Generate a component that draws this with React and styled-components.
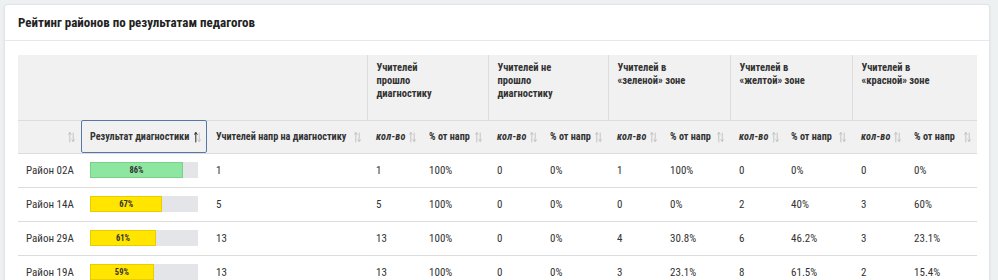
import React from 'react';
import styled, { createGlobalStyle } from 'styled-components';

const FONT = `"Liberation Sans Narrow", "Roboto Condensed", "DejaVu Sans Condensed", Roboto, sans-serif`;

const Global = createGlobalStyle`
  html, body { margin: 0; padding: 0; background: #edf1f2; }
  body { font-family: ${FONT}; color: #333; }
`;

const Page = styled.div`
  box-sizing: border-box;
  height: 280px;
  overflow: hidden;
  padding: 4px 0 0 4px;
`;

const Card = styled.section`
  box-sizing: border-box;
  width: 986px;
  min-height: 300px;
  background: #fff;
  border: 1px solid #e1e5e7;
  border-radius: 3px;
  box-shadow: 0 1px 3px rgba(0, 0, 0, 0.06);
`;

const CardHeader = styled.header`
  height: 35px;
  display: flex;
  align-items: center;
  padding: 0 13px;
  border-bottom: 1px solid #e6e9eb;
`;

const Title = styled.h3`
  margin: 0;
  font-size: 13px;
  font-weight: 700;
  color: #222;
`;

const CardBody = styled.div`
  padding: 14px 13px 0 13px;
`;

const Table = styled.table`
  width: 959px;
  table-layout: fixed;
  border-collapse: collapse;
  font-family: ${FONT};
`;

const GroupTh = styled.th`
  height: 65px;
  box-sizing: border-box;
  background: #f1f1f1;
  vertical-align: top;
  text-align: left;
  padding: 6px 9px 0 9px;
  border-bottom: 1px solid #dcdcdc;
  border-left: ${(p) => (p.$sep ? '1px solid #dcdcdc' : 'none')};
`;

const GroupLabel = styled.div`
  max-width: 74px;
  font-size: 10.5px;
  font-weight: 700;
  line-height: 13px;
  color: #333;
`;

const SubTh = styled.th`
  height: 33px;
  box-sizing: border-box;
  background: #f1f1f1;
  padding: 0 6px 0 9px;
  border-bottom: 1px solid #dcdcdc;
  text-align: left;
  font-size: 10.2px;
  font-weight: 700;
  color: #333;
  white-space: nowrap;
  outline: ${(p) => (p.$active ? '1px solid #5877a8' : 'none')};
  outline-offset: -1px;
  border-radius: ${(p) => (p.$active ? '2px' : '0')};
`;

const SubInner = styled.div`
  display: flex;
  align-items: center;
  justify-content: ${(p) => (p.$empty ? 'flex-end' : 'space-between')};
  gap: 3px;
`;

const SubLabel = styled.span`
  font-style: ${(p) => (p.$italic ? 'italic' : 'normal')};
  letter-spacing: ${(p) => (p.$italic ? '0.3px' : '0')};
`;

const Td = styled.td`
  height: 34px;
  box-sizing: border-box;
  padding: 0 9px;
  border-bottom: 1px solid #dcdcdc;
  font-size: 11px;
  color: #333;
  white-space: nowrap;
`;

const NameTd = styled(Td)`
  padding-left: 8px;
`;

const Bar = styled.div`
  width: 108px;
  height: 16px;
  background: #e3e5e8;
  display: flex;
`;

const Fill = styled.div`
  box-sizing: border-box;
  height: 100%;
  background: ${(p) => (p.$tone === 'green' ? '#8fe6a1' : '#ffe500')};
  border: 1px solid ${(p) => (p.$tone === 'green' ? '#74d48a' : '#e8cd00')};
  display: flex;
  align-items: center;
  justify-content: center;
  font-size: 8.5px;
  font-weight: 700;
  color: #333;
`;

const SortIcon = ({ active }) => (
  <svg width="7" height="12" viewBox="0 0 7 12" style={{ flex: 'none' }}>
    <g fill="none" strokeWidth="1" strokeLinecap="round" strokeLinejoin="round">
      <g stroke={active ? '#2b2b2b' : '#c4c4c4'}>
        <line x1="1.8" y1="1.5" x2="1.8" y2="11" />
        <polyline points="0.4,3.4 1.8,1.5 3.2,3.4" />
      </g>
      <g stroke="#c4c4c4">
        <line x1="5.2" y1="2" x2="5.2" y2="10.5" />
        <polyline points="3.8,8.6 5.2,10.5 6.6,8.6" />
      </g>
    </g>
  </svg>
);

const widths = [63, 126, 160, 53, 68, 53, 67, 53, 69, 52, 70, 53, 72];

const groups = [
  'Учителей прошло диагностику',
  'Учителей не прошло диагностику',
  'Учителей в «зеленой» зоне',
  'Учителей в «желтой» зоне',
  'Учителей в «красной» зоне',
];

const rows = [
  { name: 'Район 02А', pct: 86, tone: 'green', sent: 1, v: [['1', '100%'], ['0', '0%'], ['1', '100%'], ['0', '0%'], ['0', '0%']] },
  { name: 'Район 14А', pct: 67, tone: 'yellow', sent: 5, v: [['5', '100%'], ['0', '0%'], ['0', '0%'], ['2', '40%'], ['3', '60%']] },
  { name: 'Район 29А', pct: 61, tone: 'yellow', sent: 13, v: [['13', '100%'], ['0', '0%'], ['4', '30.8%'], ['6', '46.2%'], ['3', '23.1%']] },
  { name: 'Район 19А', pct: 59, tone: 'yellow', sent: 13, v: [['13', '100%'], ['0', '0%'], ['3', '23.1%'], ['8', '61.5%'], ['2', '15.4%']] },
];

export default function App() {
  return (
    <>
      <Global />
      <Page>
        <Card>
          <CardHeader>
            <Title>Рейтинг районов по результатам педагогов</Title>
          </CardHeader>
          <CardBody>
            <Table>
              <colgroup>
                {widths.map((w, i) => (
                  <col key={i} style={{ width: w }} />
                ))}
              </colgroup>
              <thead>
                <tr>
                  <GroupTh colSpan={3} />
                  {groups.map((g) => (
                    <GroupTh key={g} colSpan={2} $sep>
                      <GroupLabel>{g}</GroupLabel>
                    </GroupTh>
                  ))}
                </tr>
                <tr>
                  <SubTh>
                    <SubInner $empty>
                      <SortIcon />
                    </SubInner>
                  </SubTh>
                  <SubTh $active>
                    <SubInner>
                      <SubLabel>Результат диагностики</SubLabel>
                      <SortIcon active />
                    </SubInner>
                  </SubTh>
                  <SubTh>
                    <SubInner>
                      <SubLabel>Учителей напр на диагностику</SubLabel>
                      <SortIcon />
                    </SubInner>
                  </SubTh>
                  {groups.map((g) => (
                    <React.Fragment key={g}>
                      <SubTh>
                        <SubInner>
                          <SubLabel $italic>кол-во</SubLabel>
                          <SortIcon />
                        </SubInner>
                      </SubTh>
                      <SubTh>
                        <SubInner>
                          <SubLabel>% от напр</SubLabel>
                          <SortIcon />
                        </SubInner>
                      </SubTh>
                    </React.Fragment>
                  ))}
                </tr>
              </thead>
              <tbody>
                {rows.map((r) => (
                  <tr key={r.name}>
                    <NameTd>{r.name}</NameTd>
                    <Td>
                      <Bar>
                        <Fill $tone={r.tone} style={{ width: `${r.pct}%` }}>
                          {r.pct}%
                        </Fill>
                      </Bar>
                    </Td>
                    <Td>{r.sent}</Td>
                    {r.v.map(([a, b], i) => (
                      <React.Fragment key={i}>
                        <Td>{a}</Td>
                        <Td>{b}</Td>
                      </React.Fragment>
                    ))}
                  </tr>
                ))}
              </tbody>
            </Table>
          </CardBody>
        </Card>
      </Page>
    </>
  );
}
